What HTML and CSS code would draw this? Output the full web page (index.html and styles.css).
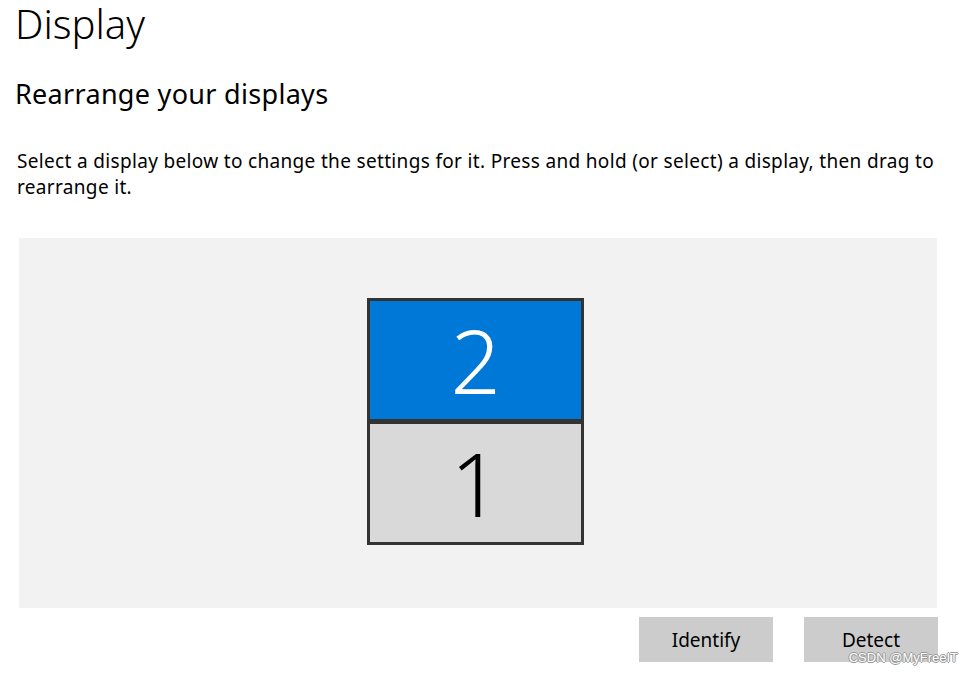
FILE: index.html
```html
<!DOCTYPE html>
<html lang="en">
<head>
    <meta charset="UTF-8">
    <meta name="viewport" content="width=device-width, initial-scale=1.0">
    <title>Display</title>
    <link rel="stylesheet" href="styles.css">
</head>
<body>
    <div class="page">
        <h1 class="title">Display</h1>
        <h2 class="subtitle">Rearrange your displays</h2>
        <p class="desc">Select a display below to change the settings for it. Press and hold (or select) a display, then drag to rearrange it.</p>

        <div class="arrange">
            <div class="monitors">
                <div class="monitor selected">2</div>
                <div class="monitor">1</div>
            </div>
        </div>

        <div class="actions">
            <button class="btn">Identify</button>
            <button class="btn">Detect</button>
        </div>
    </div>
    <div class="watermark">CSDN @MyFreeIT</div>
</body>
</html>
```

FILE: styles.css
```css
/* ===== General ===== */
body {
    margin: 0;
    background: #fff;
    color: #000;
    font-family: "Noto Sans", "Open Sans", sans-serif;
    overflow: hidden;
}

.page {
    padding: 0 35px 0 15px;
}

.title {
    margin: 0;
    font-size: 40px;
    font-weight: 300;
    line-height: 48px;
}

.subtitle {
    margin: 28px 0 0;
    font-size: 27px;
    font-weight: 400;
    line-height: 36px;
    letter-spacing: 0.3px;
}

.desc {
    margin: 36px 0 0 2px;
    font-size: 19px;
    line-height: 26px;
    letter-spacing: 0.33px;
}

/* ===== Display arrangement area ===== */
.arrange {
    margin: 38px 1px 0 4px;
    height: 370px;
    background: #f2f2f2;
    display: flex;
    justify-content: center;
    padding-top: 60px;
    box-sizing: border-box;
}

.monitors {
    display: flex;
    flex-direction: column;
    margin-right: 5px;
}

.monitor {
    width: 211px;
    height: 118px;
    border: 3px solid #333;
    background: #d9d9d9;
    color: #000;
    font-size: 88px;
    font-weight: 300;
    line-height: 118px;
    text-align: center;
}

.monitor + .monitor {
    margin-top: -1px;
}

.monitor.selected {
    background: #0078d7;
    color: #fff;
}

/* ===== Buttons ===== */
.actions {
    display: flex;
    justify-content: flex-end;
    gap: 31px;
    margin-top: 9px;
}

.btn {
    width: 134px;
    height: 45px;
    border: none;
    background: #cccccc;
    color: #000;
    font-family: "Noto Sans", "Open Sans", sans-serif;
    font-size: 19px;
    padding: 0;
}

.watermark {
    position: absolute;
    right: 15px;
    top: 650px;
    font-family: "Liberation Sans", Arial, sans-serif;
    font-size: 13px;
    color: #fff;
    text-shadow: 1px 0 0 #999, -1px 0 0 #999, 0 1px 0 #999, 0 -1px 0 #999;
}
```
